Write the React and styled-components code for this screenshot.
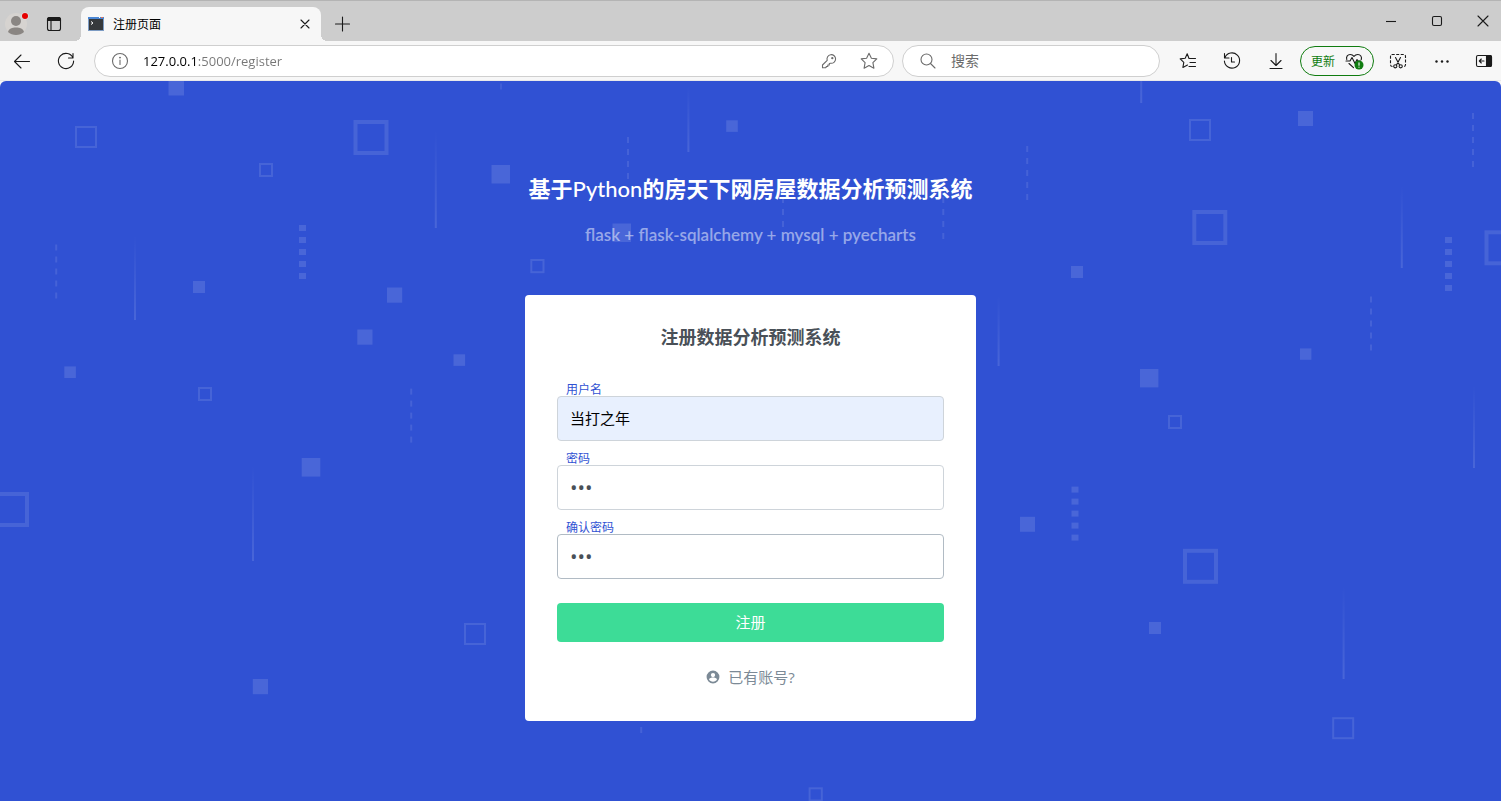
import React, { useState } from 'react';
import styled, { createGlobalStyle } from 'styled-components';

const GlobalStyle = createGlobalStyle`
  * {
    box-sizing: border-box;
  }

  body {
    margin: 0;
    font-family: 'Open Sans', 'Noto Sans CJK SC', sans-serif;
    background: #f7f7f7;
  }

  button,
  input {
    font-family: inherit;
  }
`;

const Window = styled.div`
  display: flex;
  flex-direction: column;
  min-height: 100vh;
`;

const TitleBar = styled.header`
  display: flex;
  align-items: flex-end;
  height: 41px;
  background: #cdcdcd;
  border-top: 1px solid #b4b4b4;
`;

const IconButton = styled.button`
  display: flex;
  flex: none;
  align-items: center;
  justify-content: center;
  width: ${(props) => props.$width || 44}px;
  height: 32px;
  padding: 0;
  border: none;
  background: none;
  color: ${(props) => props.$color || '#1a1a1a'};
  cursor: pointer;
`;

const TitleButton = styled(IconButton)`
  height: 34px;
`;

const SidebarButton = styled(IconButton)`
  width: 34px;
  margin-left: 3px;
`;

const ProfileArea = styled.div`
  display: flex;
  flex: none;
  width: 81px;
`;

const Tab = styled.div`
  position: relative;
  display: flex;
  align-items: center;
  flex: none;
  width: 240px;
  height: 34px;
  padding: 0 6px 0 7px;
  border-radius: 8px 8px 0 0;
  background: #f7f7f7;
  font-size: 12px;
  color: #000;

  /* flared feet where the tab meets the toolbar */
  &::before,
  &::after {
    content: '';
    position: absolute;
    bottom: 0;
    width: 6px;
    height: 6px;
  }

  &::before {
    right: 100%;
    background: radial-gradient(circle at 0 0, transparent 6px, #f7f7f7 6px);
  }

  &::after {
    left: 100%;
    background: radial-gradient(circle at 100% 0, transparent 6px, #f7f7f7 6px);
  }
`;

const TabTitle = styled.span`
  flex: 1;
  margin-left: 9px;
`;

const WindowControls = styled.div`
  display: flex;
  align-self: center;
  gap: 10px;
  margin-left: auto;
`;

const Toolbar = styled.div`
  display: flex;
  align-items: center;
  height: 40px;
  background: #f7f7f7;
  border-bottom: 1px solid #e9e9ea;
`;

const Pill = styled.label`
  display: flex;
  align-items: center;
  height: 32px;
  border: 1px solid #cfcfcf;
  border-radius: 16px;
  background: #fff;
  color: #6b6b6b;
`;

const AddressPill = styled(Pill)`
  flex: 1;
  margin: 0 8px 0 6px;
  padding: 0 4px 0 15px;
`;

const SearchPill = styled(Pill)`
  flex: none;
  width: 258px;
  margin-right: 6px;
  padding: 0 15px;
`;

const BarInput = styled.input`
  flex: 1;
  min-width: 0;
  margin-left: 13px;
  padding: 0;
  border: none;
  outline: none;
  background: none;
  font-size: 14px;
  color: #6b6b6b;

  &::placeholder {
    color: #6b6b6b;
  }
`;

/* host in black, port and path in grey */
const AddressInput = styled(BarInput)`
  font-size: 13px;
  background: linear-gradient(to right, #000 54px, #767676 54px);
  background-clip: text;
  -webkit-background-clip: text;
  color: transparent;
`;

const UpdateButton = styled.button`
  display: flex;
  flex: none;
  align-items: center;
  justify-content: space-between;
  width: 74px;
  height: 30px;
  margin: 0 2px;
  padding: 0 9px 0 10px;
  border: 1px solid #107c10;
  border-radius: 15px;
  background: #f7f7f7;
  font-size: 12px;
  color: #107c10;
  cursor: pointer;
`;

const Hero = styled.main`
  position: relative;
  flex: 1;
  padding: 91px 16px 80px;
  overflow: hidden;
  border-radius: 6px 6px 0 0;
  background: #3051d3;
`;

const Pattern = styled.svg`
  position: absolute;
  top: 0;
  left: 0;
  width: 100%;
  height: 100%;
`;

const Content = styled.div`
  position: relative;
  max-width: 451px;
  margin: 0 auto;
  text-align: center;
`;

const SiteTitle = styled.h1`
  margin: 0;
  font-size: 22px;
  line-height: 32px;
  font-weight: 700;
  color: #fff;
  white-space: nowrap;

  span {
    font-family: Lato, sans-serif;
    font-weight: 500;
  }
`;

const Subtitle = styled.p`
  margin: 18px 0 48px;
  font-family: Lato, sans-serif;
  font-size: 17px;
  line-height: 24px;
  font-weight: 600;
  color: rgba(255, 255, 255, 0.5);
`;

const Card = styled.form`
  padding: 32px;
  border-radius: 4px;
  background: #fff;
`;

const CardTitle = styled.h2`
  margin: 0 0 37px;
  font-size: 18px;
  line-height: 20px;
  font-weight: 700;
  color: #495057;
`;

const Field = styled.div`
  display: flex;
  flex-direction: column;
  margin-bottom: 12px;
  text-align: left;
`;

const FieldLabel = styled.label`
  padding-left: 9px;
  font-size: 12px;
  line-height: 12px;
  color: #3051d3;
`;

const FieldInput = styled.input`
  height: 45px;
  padding: 0 12px 2px;
  border: 1px solid ${(props) => (props.$active ? '#b1bbc4' : '#ced4da')};
  border-radius: 4px;
  outline: none;
  background: ${(props) => (props.$filled ? '#e8f0fe' : '#fff')};
  font-size: 15px;
  color: ${(props) => (props.$filled ? '#000' : '#495057')};

  &[type='password'] {
    padding-bottom: 0;
    font-size: 20px;
  }
`;

const SubmitButton = styled.button`
  display: block;
  width: 100%;
  height: 39px;
  margin-top: 24px;
  padding: 0 0 2px;
  border: none;
  border-radius: 4px;
  background: #3ddc97;
  font-size: 15px;
  color: #fff;
  cursor: pointer;
`;

const LoginLink = styled.a`
  display: flex;
  align-items: center;
  justify-content: center;
  gap: 8px;
  margin-top: 23px;
  font-size: 15px;
  line-height: 24px;
  color: #7c8a96;
  text-decoration: none;
`;

const Icon = ({ children, size = 20 }) => (
  <svg
    width={size}
    height={size}
    viewBox={`0 0 ${size} ${size}`}
    fill="none"
    stroke="currentColor"
    strokeWidth="1.1"
    strokeLinecap="round"
    strokeLinejoin="round"
    aria-hidden="true"
  >
    {children}
  </svg>
);

const solidSquares = [
  [168.5, 80, 15.5],
  [491.5, 165, 18.5],
  [193, 281, 12],
  [387, 287.5, 15.2],
  [357.3, 329.5, 15.2],
  [453.5, 354.3, 11.6],
  [64.3, 366.4, 11.6],
  [726.2, 120.3, 11.6],
  [612.5, 223.5, 18.5],
  [1298, 111, 15],
  [1071, 266, 12],
  [1300, 348.4, 11.4],
  [1140, 369, 18.4],
  [301.7, 458, 18.6],
  [252.8, 679, 15.2],
  [1020, 516.8, 15],
  [1149, 622, 12],
];

// x, y, outer size, stroke
const outlineSquares = [
  [75, 126, 22, 2],
  [353.5, 120, 35, 4],
  [259, 163, 14, 2],
  [198, 387, 14, 2],
  [530.3, 259, 14.2, 2],
  [1189, 119, 22, 2],
  [1192.3, 210, 35, 4],
  [1484.5, 230.3, 35, 4],
  [1168, 415, 14, 2],
  [-6, 492, 35, 4],
  [464, 623, 22, 2],
  [1183, 548.8, 35, 4],
  [1332.2, 717.2, 22, 2],
  [808.6, 787.3, 14.2, 2],
];

// x, y, width, count, opacity
const dashColumns = [
  [299, 225, 7, 5, 0.12],
  [1445, 237, 7, 5, 0.12],
  [1071.5, 486.6, 7, 5, 0.12],
  [55.2, 244.5, 2, 5, 0.1],
  [410.2, 388.6, 2, 5, 0.1],
  [500, 83.5, 2, 1, 0.08],
  [627, 137, 2, 4, 0.1],
  [782, 197, 2, 3, 0.1],
  [942.3, 197, 2, 4, 0.1],
  [1026.2, 146, 2, 5, 0.1],
  [1472, 113, 2, 5, 0.1],
  [1370, 296.5, 2, 5, 0.1],
  [640.2, 727, 2, 1, 0.1],
];

// x, top, bottom
const fadingLines = [
  [434.8, 130, 228],
  [134, 235, 320],
  [687.4, 85, 152],
  [997.6, 295, 366],
  [1140.2, 10, 103],
  [1400.8, 185, 268],
  [1473, 385, 468],
  [252, 465, 561],
  [1342.6, 585, 679],
];

const HeroPattern = () => (
  <Pattern viewBox="0 81 1501 720" preserveAspectRatio="xMidYMin slice" aria-hidden="true">
    <defs>
      <linearGradient id="fade" x1="0" y1="0" x2="0" y2="1">
        <stop offset="0" stopColor="#fff" stopOpacity="0" />
        <stop offset="1" stopColor="#fff" stopOpacity="0.12" />
      </linearGradient>
    </defs>
    <g fill="#fff">
      {solidSquares.map(([x, y, size]) => (
        <rect key={`${x}-${y}`} x={x} y={y} width={size} height={size} fillOpacity="0.12" />
      ))}
      {dashColumns.map(([x, y, width, count, opacity]) =>
        Array.from({ length: count }, (_, i) => (
          <rect
            key={`${x}-${i}`}
            x={x}
            y={y + i * 12}
            width={width}
            height="6"
            fillOpacity={opacity}
          />
        ))
      )}
    </g>
    <g fill="none" stroke="#fff" strokeOpacity="0.11">
      {outlineSquares.map(([x, y, size, stroke]) => (
        <rect
          key={`${x}-${y}`}
          x={x + stroke / 2}
          y={y + stroke / 2}
          width={size - stroke}
          height={size - stroke}
          strokeWidth={stroke}
        />
      ))}
    </g>
    {fadingLines.map(([x, top, bottom]) => (
      <rect key={x} x={x} y={top} width="2" height={bottom - top} fill="url(#fade)" />
    ))}
  </Pattern>
);

const BrowserTabs = () => (
  <TitleBar>
    <ProfileArea>
      <TitleButton $width={34} aria-label="Profile">
        <svg width="26" height="26" viewBox="0 0 26 26" aria-hidden="true">
          <circle cx="12" cy="13" r="11" fill="#d6d3d0" />
          <circle cx="12" cy="10" r="5" fill="#8a8683" />
          <path d="M4 21c1-3.500 4-4.500 8-4.500s7 1 8 4.500c-2 2-5 3-8 3s-6-1-8-3z" fill="#8a8683" />
          <circle cx="21" cy="5" r="3.800" fill="#dcdcdc" />
          <circle cx="21" cy="5" r="3" fill="#e60000" />
        </svg>
      </TitleButton>
      <TitleButton $width={40} aria-label="Tab actions">
        <Icon>
          <rect x="3.500" y="3.500" width="13" height="13" rx="2" />
          <path d="M3.500 6V5.500a2 2 0 0 1 2-2h9a2 2 0 0 1 2 2V6.500h-13z" fill="currentColor" />
          <path d="M7 7v9.500" />
        </Icon>
      </TitleButton>
    </ProfileArea>
    <Tab>
      <svg width="16" height="16" viewBox="0 0 16 16" aria-hidden="true">
        <rect x="0" y="1" width="16" height="14" fill="#7d9cc4" />
        <rect x="0" y="1" width="16" height="2" fill="#4a86d4" />
        <rect x="11" y="1" width="1" height="1" fill="#fff" />
        <rect x="13" y="1" width="2" height="1" fill="#e0705a" />
        <rect x="1" y="3" width="14" height="11" fill="#36393c" />
        <path d="M3 5.500l2 1.500-2 1.500" fill="none" stroke="#fff" />
      </svg>
      <TabTitle>注册页面</TabTitle>
      <TitleButton $width={20} aria-label="Close tab">
        <Icon size={10}>
          <path d="M1 1l8 8M9 1l-8 8" />
        </Icon>
      </TitleButton>
    </Tab>
    <TitleButton aria-label="New tab">
      <Icon>
        <path d="M9.500 3v14M2.500 10h14" />
      </Icon>
    </TitleButton>
    <WindowControls>
      <IconButton $width={36} aria-label="Minimize">
        <Icon size={12}>
          <path d="M1 6.500h10" strokeLinecap="butt" />
        </Icon>
      </IconButton>
      <IconButton $width={36} aria-label="Maximize">
        <Icon size={12}>
          <rect x="1.500" y="1.500" width="9" height="9" rx="1.500" />
        </Icon>
      </IconButton>
      <IconButton $width={36} aria-label="Close">
        <Icon size={12}>
          <path d="M1 1l10 10M11 1L1 11" />
        </Icon>
      </IconButton>
    </WindowControls>
  </TitleBar>
);

const BrowserToolbar = () => {
  const [url, setUrl] = useState('127.0.0.1:5000/register');
  const [query, setQuery] = useState('');

  return (
    <Toolbar>
      <IconButton aria-label="Back">
        <Icon>
          <path d="M17.500 10.500H2.500M9 4l-6.500 6.500L9 17" />
        </Icon>
      </IconButton>
      <IconButton aria-label="Refresh">
        <Icon>
          <path d="M17 7A7.600 7.600 0 1 0 17.600 10M17 2.500V7h-4.500" />
        </Icon>
      </IconButton>
      <AddressPill>
        <Icon>
          <circle cx="10" cy="10" r="7.500" />
          <path d="M10 9v4.500" />
          <circle cx="10" cy="6.600" r="0.400" fill="currentColor" />
        </Icon>
        <AddressInput
          aria-label="Address"
          value={url}
          onChange={(e) => setUrl(e.target.value)}
        />
        <IconButton $width={40} $color="#6b6b6b" aria-label="Saved passwords">
          <Icon>
            <path d="M8.200 9.300A4.300 4.300 0 1 1 11.500 12.200L10.300 12.500V14H8.800v1.500H7.300V16l-.8.8H3.500v-2.800z" />
            <circle cx="13.300" cy="7.200" r="0.600" />
          </Icon>
        </IconButton>
        <IconButton $width={40} $color="#6b6b6b" aria-label="Add to favorites">
          <Icon>
            <path d="M10 2.200l2.400 5 5.400.7-3.900 3.800 1 5.500L10 14.600l-4.900 2.600 1-5.500-3.900-3.800 5.400-.7z" />
          </Icon>
        </IconButton>
      </AddressPill>
      <SearchPill>
        <Icon>
          <circle cx="8.500" cy="8.500" r="5.500" />
          <path d="M12.500 12.500l4.500 4.500" />
        </Icon>
        <BarInput
          aria-label="Search"
          placeholder="搜索"
          value={query}
          onChange={(e) => setQuery(e.target.value)}
        />
      </SearchPill>
      <IconButton aria-label="Favorites">
        <Icon>
          <path d="M11 7.500L9.200 2.800 7.200 7.300l-5 .6 3.600 3.500-.9 5 4.600-2.300M11 7.500h6.500M12 11.500h5.500M11 15.500h6.500" />
        </Icon>
      </IconButton>
      <IconButton aria-label="History">
        <Icon>
          <path d="M3 6.500A7.600 7.600 0 1 1 2.400 10M2.500 2.500v4.500h4.500M9.500 6.500v4.500h3" />
        </Icon>
      </IconButton>
      <IconButton aria-label="Downloads">
        <Icon>
          <path d="M10 2.500v11.500M5 9.500l5 5 5-5M4 17.500h12" />
        </Icon>
      </IconButton>
      <UpdateButton>
        更新
        <Icon>
          <path
            d="M2.800 8.500C1.800 5.500 3.800 3.500 6.200 3.500c1.800 0 3 .8 3.800 1.800.8-1 2-1.800 3.800-1.800 2.500 0 4.500 2.200 3.400 5.200M5 12.500l4.500 4.200"
            stroke="#1a1a1a"
          />
          <path d="M2 10h4L8 6.500l3 6 2-4 1 1.500h2.500" stroke="#1a1a1a" />
          <circle cx="15" cy="14" r="4.500" fill="#107c10" stroke="none" />
          <path d="M15 11.800v2.400M15 16v.2" stroke="#fff" />
        </Icon>
      </UpdateButton>
      <IconButton aria-label="Screenshot">
        <Icon>
          <path
            d="M4.500 15.500c-1.300 0-2-.7-2-2V5.500c0-1.300.7-2 2-2h11c1.300 0 2 .7 2 2v8c0 1.300-.7 2-2 2"
            strokeDasharray="3 1.500"
            strokeLinecap="butt"
          />
          <path d="M7.500 6.500l4 7.500M12.500 6.500l-4 7.500" />
          <circle cx="7.300" cy="15.300" r="1.600" />
          <circle cx="12.700" cy="15.300" r="1.600" />
        </Icon>
      </IconButton>
      <IconButton aria-label="Settings and more">
        <Icon>
          <g fill="currentColor" stroke="none">
            <circle cx="4.500" cy="10.500" r="1.200" />
            <circle cx="10" cy="10.500" r="1.200" />
            <circle cx="15.500" cy="10.500" r="1.200" />
          </g>
        </Icon>
      </IconButton>
      <SidebarButton aria-label="Sidebar">
        <Icon>
          <rect x="2.500" y="4.500" width="15" height="11" rx="1.500" />
          <path d="M12.500 4.500H16a1.500 1.500 0 0 1 1.500 1.500v8a1.500 1.500 0 0 1-1.500 1.500h-3.500z" fill="currentColor" />
          <path d="M10 10H5.500M7.300 8L5.300 10l2 2" />
        </Icon>
      </SidebarButton>
    </Toolbar>
  );
};

const App = () => {
  const [form, setForm] = useState({ username: '当打之年', password: '123', confirm: '123' });

  const handleChange = (e) => {
    setForm({ ...form, [e.target.name]: e.target.value });
  };

  const handleSubmit = (e) => {
    e.preventDefault();
  };

  return (
    <>
      <GlobalStyle />
      <Window>
        <BrowserTabs />
        <BrowserToolbar />
        <Hero>
          <HeroPattern />
          <Content>
            <SiteTitle>
              基于<span>Python</span>的房天下网房屋数据分析预测系统
            </SiteTitle>
            <Subtitle>flask + flask-sqlalchemy + mysql + pyecharts</Subtitle>
            <Card onSubmit={handleSubmit}>
              <CardTitle>注册数据分析预测系统</CardTitle>
              <Field>
                <FieldLabel htmlFor="username">用户名</FieldLabel>
                <FieldInput
                  id="username"
                  name="username"
                  $filled
                  value={form.username}
                  onChange={handleChange}
                />
              </Field>
              <Field>
                <FieldLabel htmlFor="password">密码</FieldLabel>
                <FieldInput
                  id="password"
                  name="password"
                  type="password"
                  value={form.password}
                  onChange={handleChange}
                />
              </Field>
              <Field>
                <FieldLabel htmlFor="confirm">确认密码</FieldLabel>
                <FieldInput
                  id="confirm"
                  name="confirm"
                  type="password"
                  $active
                  value={form.confirm}
                  onChange={handleChange}
                />
              </Field>
              <SubmitButton type="submit">注册</SubmitButton>
              <LoginLink href="/login">
                <svg width="14" height="14" viewBox="0 0 24 24" fill="currentColor" aria-hidden="true">
                  <path d="M12 1a11 11 0 1 0 0 22 11 11 0 0 0 0-22zm0 4a3.700 3.700 0 1 1 0 7.400A3.700 3.700 0 0 1 12 5zm0 15c-3 0-5.400-1.500-6.800-3.800.1-2.200 4.500-3.200 6.800-3.200s6.700 1 6.800 3.200C17.400 18.500 15 20 12 20z" />
                </svg>
                已有账号?
              </LoginLink>
            </Card>
          </Content>
        </Hero>
      </Window>
    </>
  );
};

export default App;
